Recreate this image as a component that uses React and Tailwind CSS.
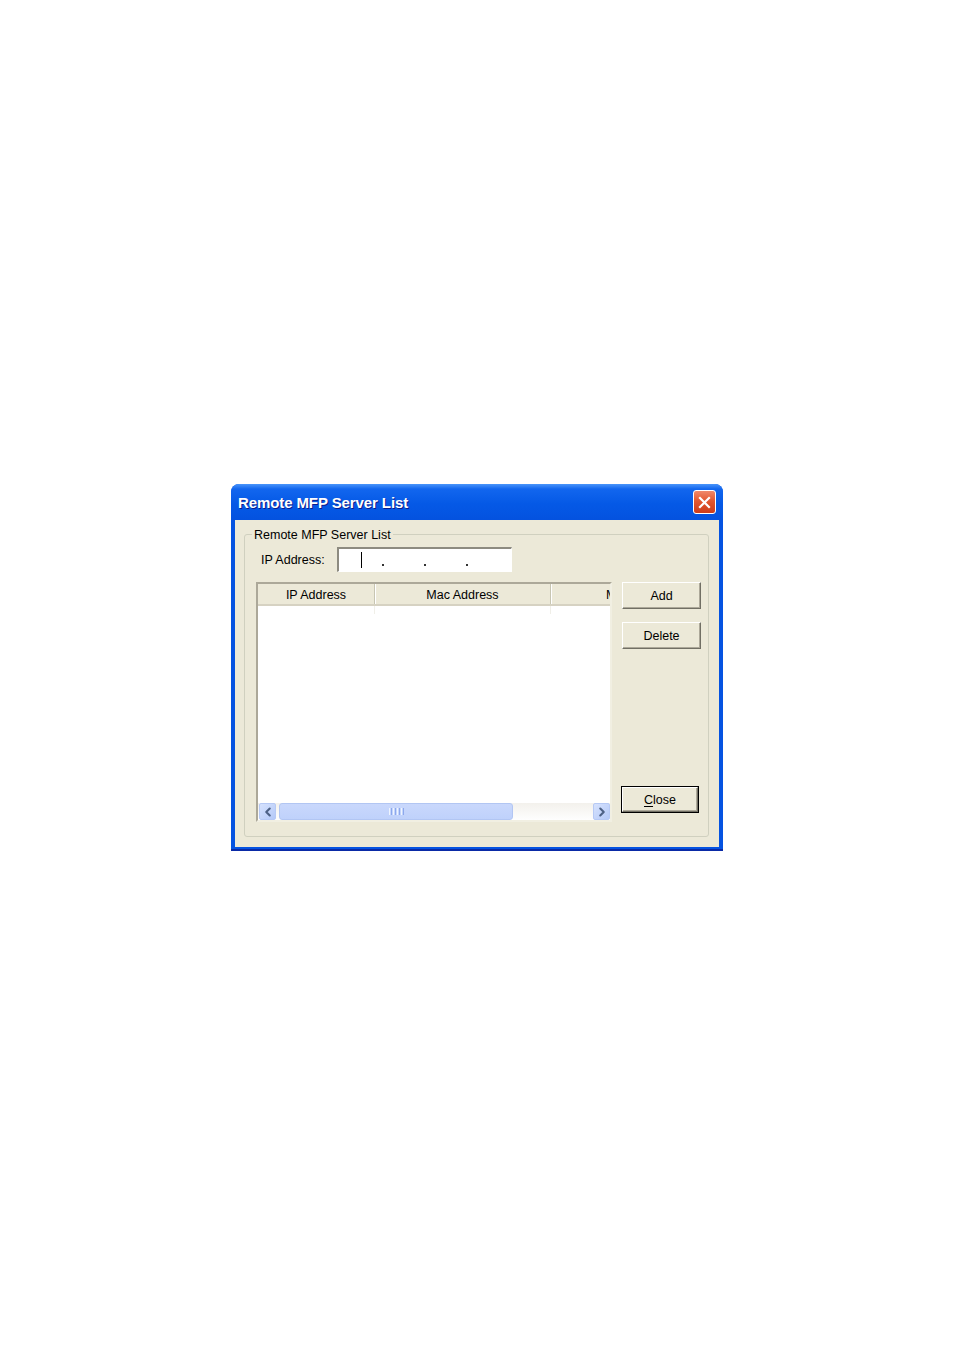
import { ChevronLeft, ChevronRight } from 'lucide-react';

const font = { fontFamily: '"Liberation Sans", Arial, sans-serif' };

function Button({ children, isDefault, className = '' }) {
  return (
    <div
      className={`${className} ${
        isDefault ? 'border border-black' : ''
      } bg-[#ece9d8]`}
    >
      <div className="h-full w-full border-t border-l border-white border-b border-r border-b-[#716f64] border-r-[#716f64] shadow-[inset_-1px_-1px_0_#aca899] flex items-center justify-center pt-[2px] text-[12.5px] text-black">
        {children}
      </div>
    </div>
  );
}

function ScrollArrow({ dir }) {
  const Icon = dir === 'left' ? ChevronLeft : ChevronRight;
  return (
    <div className="w-[17px] h-[17px] rounded-[2px] border border-[#b6c9f5] bg-gradient-to-br from-[#d6e2fd] to-[#b4c9f8] flex items-center justify-center">
      <Icon className="w-[14px] h-[14px] text-[#4d6185]" strokeWidth={3.6} />
    </div>
  );
}

export default function App() {
  return (
    <div className="min-h-[1350px] bg-white pt-[484px] pl-[231px]" style={font}>
      <div className="w-[492px] rounded-t-[8px] bg-[#0553e1] overflow-hidden border-b-[2px] border-b-[#0a2aa6]">
        {/* title bar */}
        <div className="h-[36px] flex items-center justify-between pl-[7px] pr-[7px] bg-[linear-gradient(180deg,#4a95fa_0%,#1266ee_14%,#0559e6_55%,#0452df_100%)]">
          <span className="pt-[3px] text-white font-bold text-[15px] tracking-[-0.1px] [text-shadow:1px_1px_0_#0c1c8c]">
            Remote MFP Server List
          </span>
          <div className="w-[23px] h-[24px] rounded-[3px] border border-white bg-[linear-gradient(180deg,#f0896b_0%,#e2572f_45%,#cc3c1a_100%)] flex items-center justify-center">
            <svg width="13" height="13" viewBox="0 0 13 13">
              <path d="M2 2 L11 11 M11 2 L2 11" stroke="white" strokeWidth="2.2" strokeLinecap="square" />
            </svg>
          </div>
        </div>

        {/* body */}
        <div className="mx-[4px] mb-[2px] h-[327px] bg-[#ece9d8] pt-[7px] pl-[9px] pr-[10px]">
          <fieldset className="h-[310px] border border-[#d0d0bf] rounded-[3px] px-0">
            <legend className="ml-[7px] px-[2px] text-[12.5px] leading-[15px] text-black">
              <span className="relative top-[1px]">Remote MFP Server List</span>
            </legend>

            <div className="flex items-center pl-[16px] mt-[5px]">
              <span className="w-[76px] pt-[2px] text-[12.5px] text-black">IP Address:</span>
              <div className="w-[175px] h-[25px] border-t-2 border-l-2 border-t-[#8d8b80] border-l-[#8d8b80] border-b border-r border-b-white border-r-white bg-white flex items-center">
                <div className="ml-[22px] w-[1px] h-[16px] bg-black" />
                <div className="flex items-end h-full pb-[5px]">
                  <span className="ml-[20px] w-[2px] h-[2px] bg-[#333]" />
                  <span className="ml-[40px] w-[2px] h-[2px] bg-[#333]" />
                  <span className="ml-[40px] w-[2px] h-[2px] bg-[#333]" />
                </div>
              </div>
            </div>

            <div className="flex pl-[11px] mt-[10px]">
              {/* list view */}
              <div className="w-[356px] h-[240px] border-2 border-t-[#aca899] border-l-[#aca899] border-b-[#f1efe2] border-r-[#f1efe2] bg-white flex flex-col overflow-hidden">
                <div className="h-[22px] flex bg-[#ece9d8] border-b-2 border-b-[#d6d2c2] text-[12.5px] text-black overflow-hidden shrink-0">
                  <div className="w-[117px] shrink-0 flex items-center justify-center pt-[2px] border-r border-r-[#c7c5b2] shadow-[1px_0_0_white]">
                    IP Address
                  </div>
                  <div className="w-[176px] shrink-0 flex items-center justify-center pt-[2px] border-r border-r-[#c7c5b2] shadow-[1px_0_0_white]">
                    Mac Address
                  </div>
                  <div className="w-[59px] shrink-0 overflow-hidden flex items-center pt-[2px] pl-[55px] whitespace-nowrap">
                    M
                  </div>
                </div>
                <div className="flex h-[8px]">
                  <div className="w-[117px] border-r border-r-[#f0efe8]" />
                  <div className="w-[176px] border-r border-r-[#f0efe8]" />
                </div>
                <div className="flex-1" />
                {/* horizontal scrollbar */}
                <div className="h-[17px] flex items-center bg-[linear-gradient(180deg,#f3f1ec_0%,#fefefe_100%)] pl-[1px]">
                  <ScrollArrow dir="left" />
                  <div className="ml-[3px] w-[234px] h-[17px] rounded-[3px] border border-[#b2c6f3] bg-[linear-gradient(180deg,#c9d8fc_0%,#bfd1fb_100%)] flex items-center justify-center gap-[1px]">
                    <span className="w-[1px] h-[7px] bg-[#eef4fe]" />
                    <span className="w-[1px] h-[7px] bg-[#8ca8ec]" />
                    <span className="w-[1px] h-[7px] bg-[#eef4fe]" />
                    <span className="w-[1px] h-[7px] bg-[#8ca8ec]" />
                    <span className="w-[1px] h-[7px] bg-[#eef4fe]" />
                    <span className="w-[1px] h-[7px] bg-[#8ca8ec]" />
                    <span className="w-[1px] h-[7px] bg-[#eef4fe]" />
                    <span className="w-[1px] h-[7px] bg-[#8ca8ec]" />
                  </div>
                  <div className="flex-1" />
                  <ScrollArrow dir="right" />
                </div>
              </div>

              {/* buttons */}
              <div className="ml-[10px] h-[240px] flex flex-col">
                <Button className="w-[79px] h-[27px]">Add</Button>
                <Button className="w-[79px] h-[27px] mt-[13px]">Delete</Button>
                <Button isDefault className="w-[78px] h-[27px] mt-auto mb-[9px] -ml-[1px]">
                  <span>
                    <span className="underline underline-offset-2">C</span>lose
                  </span>
                </Button>
              </div>
            </div>
          </fieldset>
        </div>
      </div>
    </div>
  );
}
